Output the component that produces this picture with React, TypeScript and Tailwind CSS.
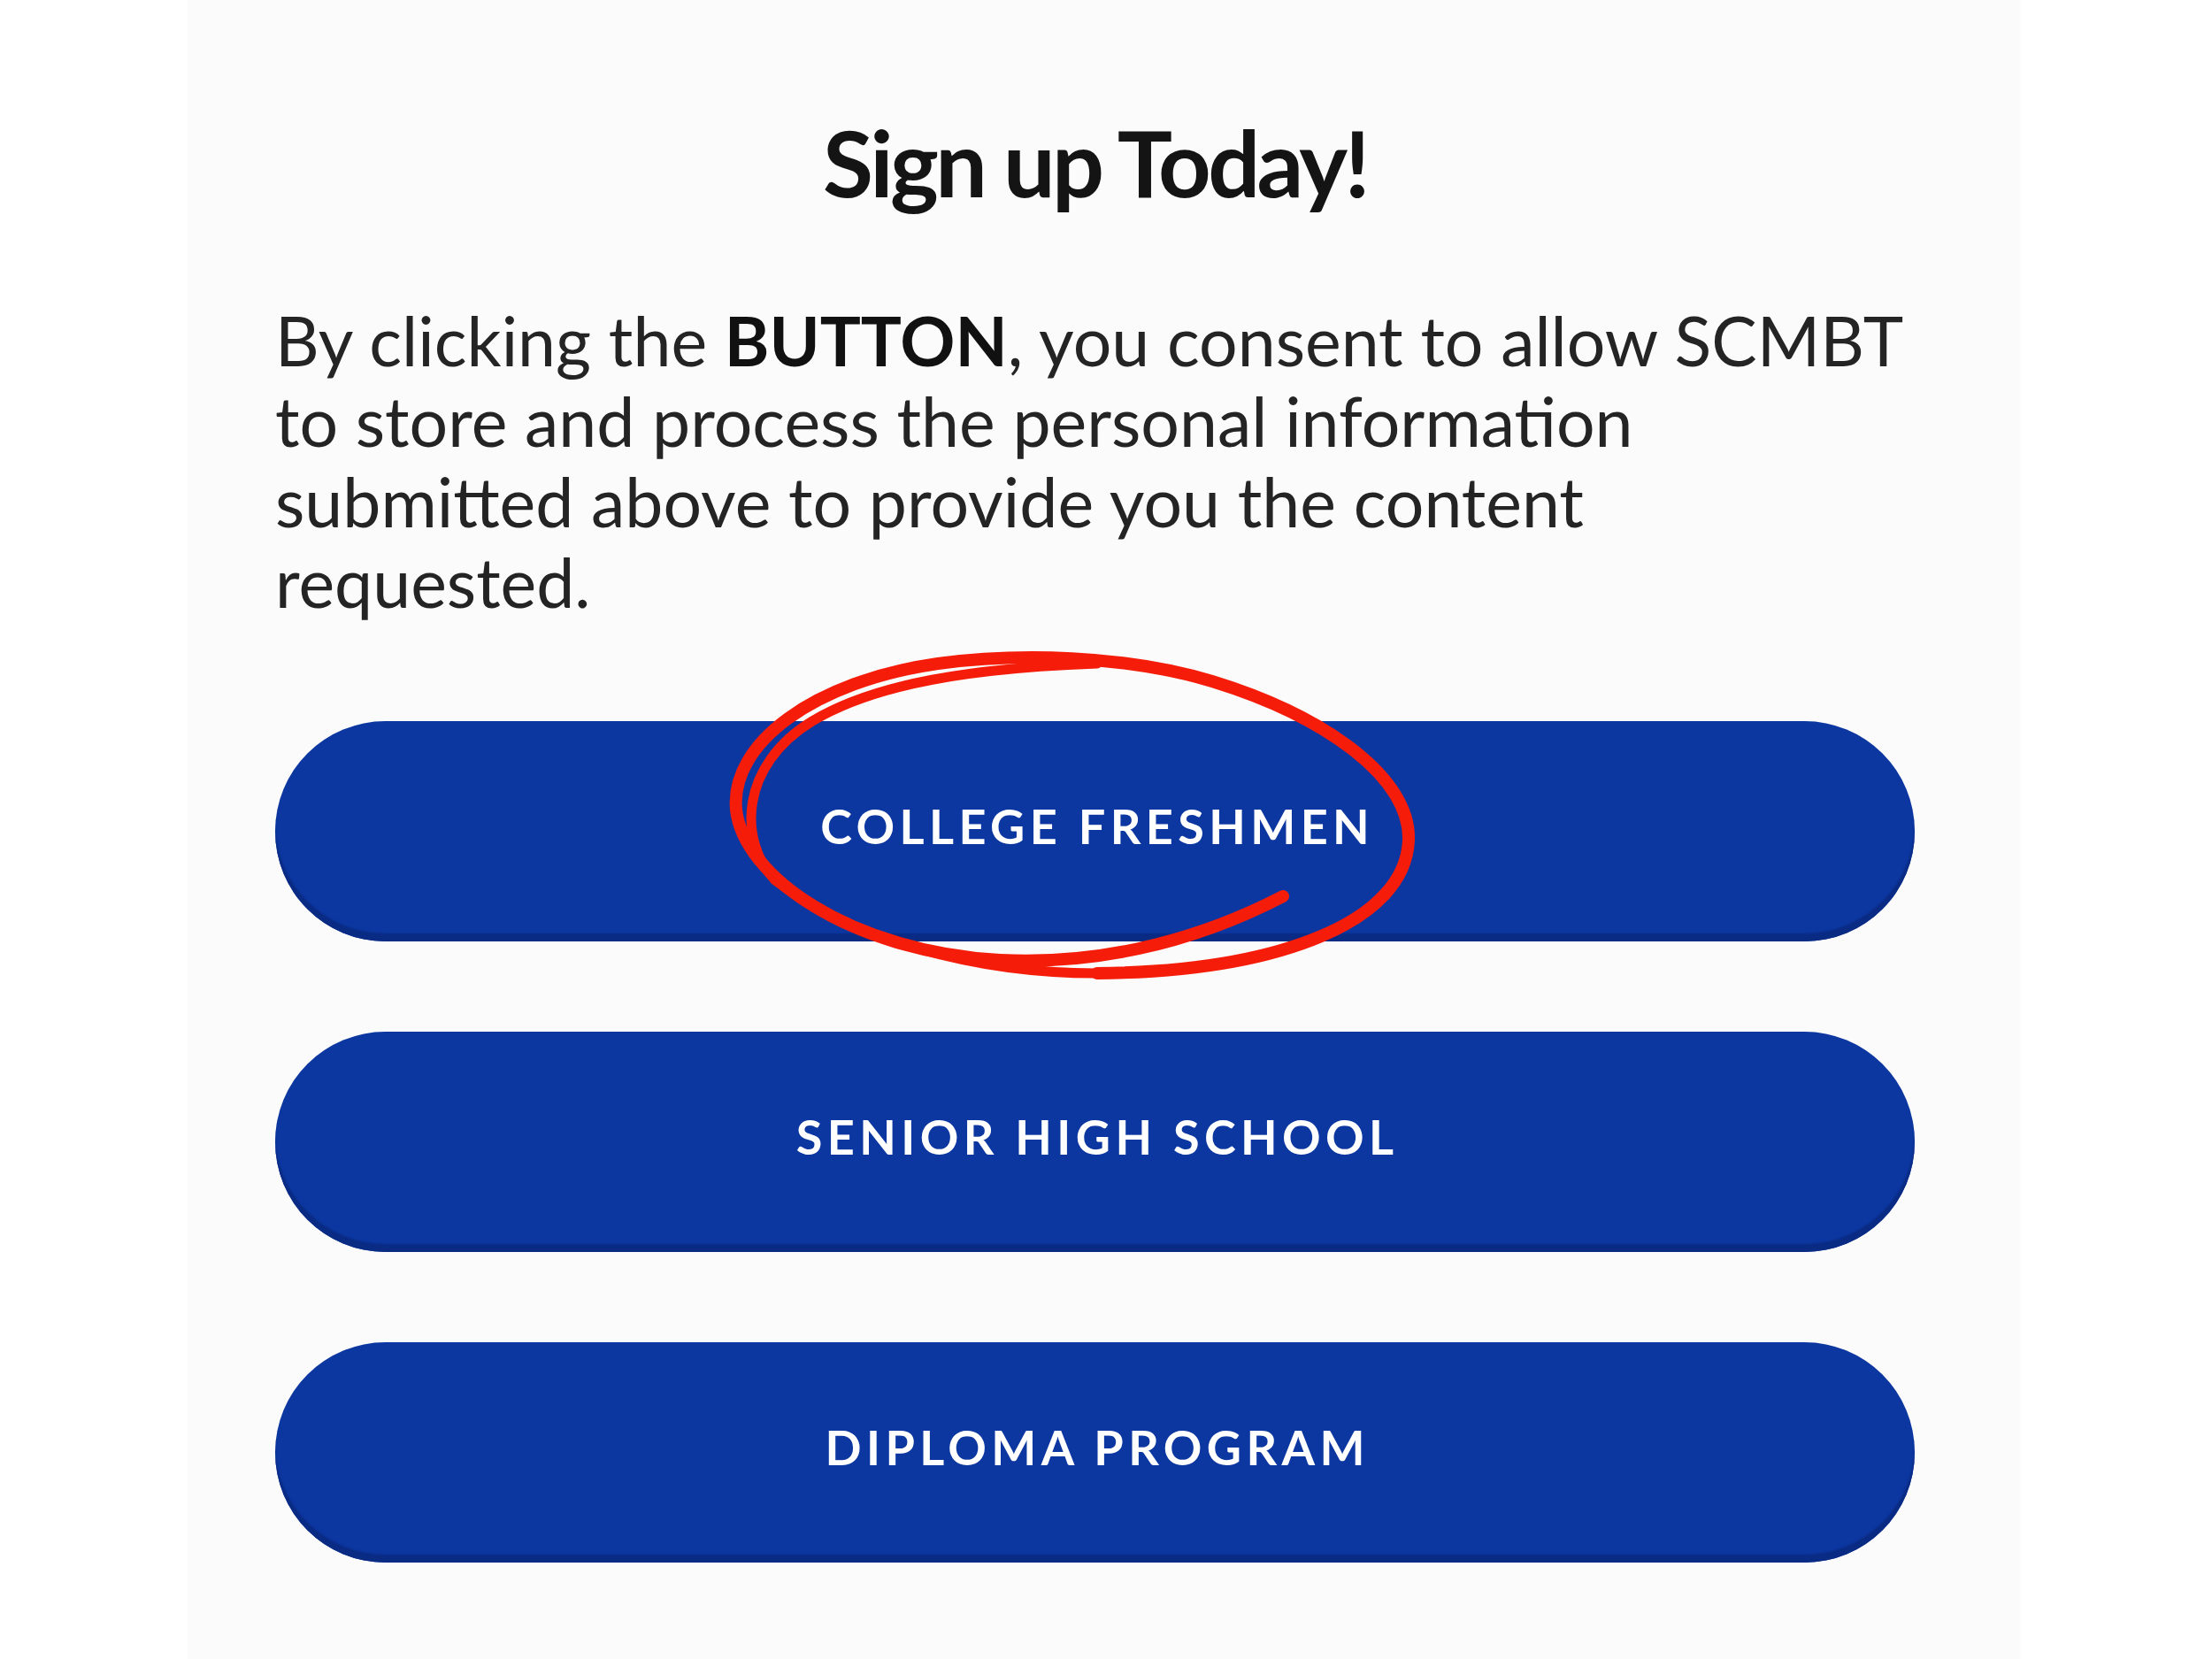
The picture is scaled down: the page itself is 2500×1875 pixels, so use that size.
import React from "react";

const options = ["COLLEGE FRESHMEN", "SENIOR HIGH SCHOOL", "DIPLOMA PROGRAM"];

function Scribble() {
    // hand-drawn red loop round the first button label (goes round about one and a half times)
    return (
        <svg
            className="pointer-events-none absolute left-0 top-0"
            width="2500"
            height="1875"
            viewBox="0 0 2500 1875"
            fill="none"
        >
            <g stroke="#f51d0a" strokeLinecap="round" strokeLinejoin="round">
                <path
                    d="M1450 1013 C1340 1070 1230 1090 1130 1085 C960 1075 840 990 832 915 C825 840 920 770 1060 750 C1150 738 1270 740 1370 770 C1500 810 1595 880 1592 950 C1588 1040 1450 1098 1240 1100"
                    strokeWidth="14"
                />
                <path
                    d="M1240 1100 C1100 1100 960 1060 876 995 C834 950 836 865 918 815 C990 772 1100 755 1240 750"
                    strokeWidth="11"
                />
            </g>
        </svg>
    );
}

export default function App() {
    return (
        <div className="relative min-h-[1875px] w-[2500px] bg-white font-['Lato','Noto_Sans',sans-serif]">
            <div className="ml-[212px] min-h-[1875px] w-[2071px] bg-[#fbfbfb] pl-[99px]">
                <div className="flex w-[1853px] flex-col">
                    <h1 className="pt-[131px] text-center text-[104px] font-bold leading-none tracking-[-0.035em] text-[#141414]">
                        Sign up Today!
                    </h1>

                    <p className="mt-[104px] whitespace-nowrap text-[77px] leading-[91px] text-[#242424]">
                        By clicking the <span className="font-bold text-[#111]">BUTTON</span>, you consent to allow SCMBT
                        <br />
                        to store and process the personal information
                        <br />
                        submitted above to provide you the content
                        <br />
                        requested.
                    </p>

                    <div className="mt-[112px] flex flex-col gap-[102px]">
                        {options.map((label) => (
                            <button
                                key={label}
                                className="flex h-[249px] w-full items-center justify-center rounded-full bg-[#0c37a0] pb-[12px] pl-[0.1em] text-[54px] font-bold tracking-[0.1em] text-white shadow-[inset_0_-9px_2px_#0a2b84]"
                            >
                                {label}
                            </button>
                        ))}
                    </div>
                </div>
            </div>
            <Scribble />
        </div>
    );
}
